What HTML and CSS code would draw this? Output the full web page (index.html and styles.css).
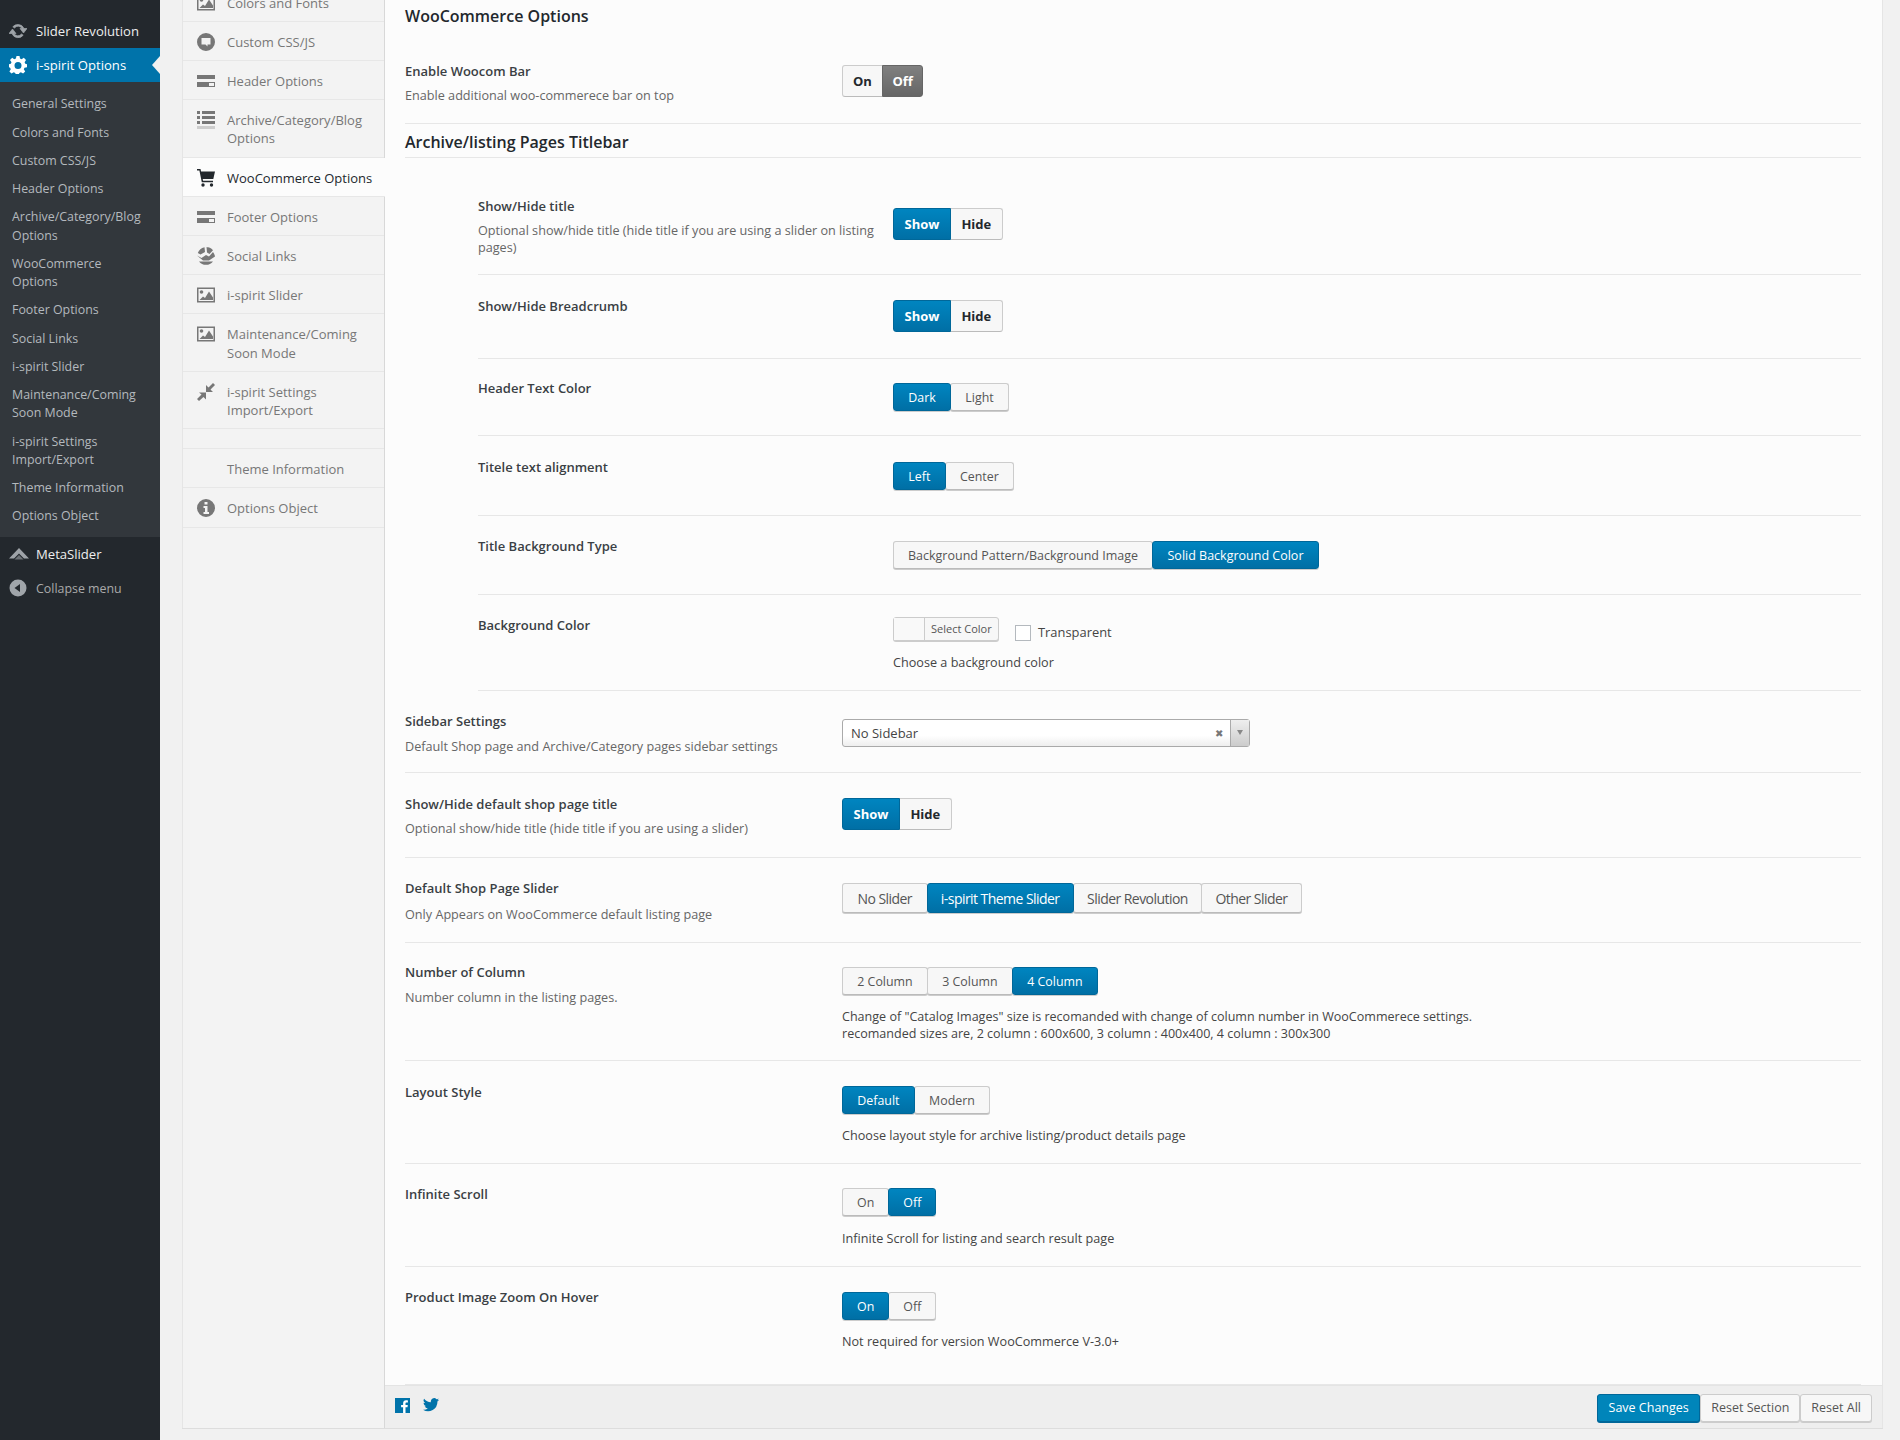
FILE: index.html
```html
<!DOCTYPE html>
<html lang="en">
<head>
<meta charset="utf-8">
<title>i-spirit Options</title>
<link rel="stylesheet" href="styles.css">
</head>
<body>
<svg class="defs" width="0" height="0" aria-hidden="true">
  <symbol id="i-card" viewBox="0 0 18 12"><path d="M0 0h18v4H0zM0 7h18v5H0zM12 8h5v3h-5z" fill-rule="evenodd"/></symbol>
  <symbol id="i-list" viewBox="0 0 18 18"><path d="M0 0h3v3H0zM5 0h13v3H5zM0 5h3v3H0zM5 5h13v3H5zM0 10h3v3H0zM5 10h13v3H5z"/><path d="M0 15h18v3H0z" opacity=".3"/></symbol>
  <symbol id="i-img" viewBox="0 0 18 15"><path fill-rule="evenodd" d="M0 0h18v15H0zM1.500 1.500v12h15v-12z"/><circle cx="4.500" cy="4.500" r="1.800"/><path d="M2.500 12.500 6 9l2 1.500L12 4l4 6v2.500z"/></symbol>
  <symbol id="i-comment" viewBox="0 0 18 18"><path fill-rule="evenodd" d="M9 0a9 9 0 1 0 0 18A9 9 0 0 0 9 0zM4.500 5h9v6.500H10.500v2l-2-2h-4z"/></symbol>
  <symbol id="i-cart" viewBox="0 0 18 18"><path d="M0 0h3.500l.6 2.500H18l-1.700 7.500H5.700l.4 1.800H16v1.500H4.800L2.400 1.500H0z"/><circle cx="6" cy="16" r="1.700"/><circle cx="14.500" cy="16" r="1.700"/></symbol>
  <symbol id="i-globe" viewBox="0 0 18 18"><path d="M9 0a9 9 0 0 1 7 3.300L12.500 7 10 5.500 9.500 0zM7.500.2 8 5 3.500 7.500.8 6A9 9 0 0 1 7.500.2zM0 8.500l4.500 2.500L9 8l3 1.500 4-4.500a9 9 0 0 1 2 4.500L12 13.500H6zM2 14.500h14a9 9 0 0 1-14 0z"/></symbol>
  <symbol id="i-compress" viewBox="0 0 18 18"><path d="M18 2 13.500 6.500 16 9H9V2l2.500 2.500L16 0zM0 16l4.500-4.500L2 9.500h7v7l-2.500-2.500L2 18z"/></symbol>
  <symbol id="i-info" viewBox="0 0 18 18"><path fill-rule="evenodd" d="M9 0a9 9 0 1 0 0 18A9 9 0 0 0 9 0zM7.500 3h3v2.600h-3zM6.500 7h4v6H12v2H6.500v-2H8V9H6.500z"/></symbol>
</svg>

<div class="page">
  <nav class="admin">
    <div class="admin-top">
      <a class="admin-item">
        <svg class="admin-icon admin-icon-thick" viewBox="0 0 18 18"><path d="M9 2.500a6.500 6.500 0 0 1 6 4H18l-3.500 4.500L11 6.500h2A4.500 4.500 0 0 0 5.500 6L3.800 4.800A6.500 6.500 0 0 1 9 2.500zM3.500 7 7 11.500H5a4.500 4.500 0 0 0 7.500.5l1.700 1.200A6.500 6.500 0 0 1 3 11.500H0z"/></svg>
        <span>Slider Revolution</span>
      </a>
    </div>
    <a class="admin-item admin-item-active">
      <svg class="admin-icon" viewBox="0 0 18 18"><path fill-rule="evenodd" d="M7.500 0h3l.5 2.500 1.600.7L14.800 1.800 17 4l-1.400 2.200.7 1.600L18 8.200v3l-2.500.5-.7 1.600 1.400 2.200-2.100 2.100-2.200-1.400-1.600.7-.5 2.500h-3l-.5-2.500-1.600-.7-2.200 1.400L.4 15.500 1.800 13.300l-.7-1.600L0 11.200v-3l1.800-.4.700-1.600L1 4l2.200-2.200 2 1.400 1.700-.7zM9 6a3.500 3.500 0 1 0 0 7 3.500 3.500 0 0 0 0-7z"/></svg>
      <span>i-spirit Options</span>
    </a>
    <ul class="admin-sub">
      <li>General Settings</li>
      <li>Colors and Fonts</li>
      <li>Custom CSS/JS</li>
      <li>Header Options</li>
      <li>Archive/Category/Blog Options</li>
      <li>WooCommerce Options</li>
      <li>Footer Options</li>
      <li>Social Links</li>
      <li>i-spirit Slider</li>
      <li>Maintenance/Coming Soon Mode</li>
      <li>i-spirit Settings Import/Export</li>
      <li>Theme Information</li>
      <li>Options Object</li>
    </ul>
    <div class="admin-bottom">
      <a class="admin-item">
        <svg class="admin-icon admin-icon-wide" viewBox="0 0 20 12"><path d="M10 0 20 10.500h-5L10 5.500 5 10.500H0z"/><path d="M10 7l4.500 4.500h-9z" opacity=".6"/></svg>
        <span>MetaSlider</span>
      </a>
      <a class="admin-item admin-collapse">
        <svg class="admin-icon" viewBox="0 0 18 18"><path fill-rule="evenodd" d="M9 .5a8.500 8.500 0 1 0 0 17 8.500 8.500 0 0 0 0-17zM11 5v8L5.500 9z"/></svg>
        <span>Collapse menu</span>
      </a>
    </div>
  </nav>

  <div class="content">
    <div class="panel">
      <aside class="tabs">
        <ul class="tab-list">
          <li class="tab"><svg class="tab-icon"><use href="#i-img"/></svg><span>Colors and Fonts</span></li>
          <li class="tab"><svg class="tab-icon"><use href="#i-comment"/></svg><span>Custom CSS/JS</span></li>
          <li class="tab"><svg class="tab-icon"><use href="#i-card"/></svg><span>Header Options</span></li>
          <li class="tab"><svg class="tab-icon"><use href="#i-list"/></svg><span>Archive/Category/Blog Options</span></li>
          <li class="tab tab-active"><svg class="tab-icon"><use href="#i-cart"/></svg><span>WooCommerce Options</span></li>
          <li class="tab"><svg class="tab-icon"><use href="#i-card"/></svg><span>Footer Options</span></li>
          <li class="tab"><svg class="tab-icon"><use href="#i-globe"/></svg><span>Social Links</span></li>
          <li class="tab"><svg class="tab-icon"><use href="#i-img"/></svg><span>i-spirit Slider</span></li>
          <li class="tab"><svg class="tab-icon"><use href="#i-img"/></svg><span>Maintenance/Coming Soon Mode</span></li>
          <li class="tab"><svg class="tab-icon"><use href="#i-compress"/></svg><span>i-spirit Settings Import/Export</span></li>
          <li class="tab tab-gap"></li>
          <li class="tab"><span class="tab-noicon">Theme Information</span></li>
          <li class="tab"><svg class="tab-icon"><use href="#i-info"/></svg><span>Options Object</span></li>
        </ul>
      </aside>

      <div class="main">
        <main class="form">
          <h2 class="form-title">WooCommerce Options</h2>

          <section class="row row-woo">
            <div class="label"><h4>Enable Woocom Bar</h4><p class="p-tight">Enable additional woo-commerece bar on top</p></div>
            <div class="ctl ctl-up"><div class="seg seg-bold seg-woo"><span>On</span><span class="on-grey">Off</span></div></div>
          </section>

          <h3 class="section-title">Archive/listing Pages Titlebar</h3>

          <div class="nested">
            <section class="row row-first">
              <div class="label"><h4>Show/Hide title</h4><p class="p-tight">Optional show/hide title (hide title if you are using a slider on listing pages)</p></div>
              <div class="ctl"><div class="seg seg-bold"><span class="on">Show</span><span>Hide</span></div></div>
            </section>
            <section class="row row-crumb">
              <div class="label"><h4>Show/Hide Breadcrumb</h4></div>
              <div class="ctl"><div class="seg seg-bold"><span class="on">Show</span><span>Hide</span></div></div>
            </section>
            <section class="row row-htc">
              <div class="label"><h4>Header Text Color</h4></div>
              <div class="ctl"><div class="seg"><span class="on">Dark</span><span>Light</span></div></div>
            </section>
            <section class="row row-align">
              <div class="label"><h4>Titele text alignment</h4></div>
              <div class="ctl"><div class="seg"><span class="on">Left</span><span>Center</span></div></div>
            </section>
            <section class="row row-bgt">
              <div class="label"><h4>Title Background Type</h4></div>
              <div class="ctl"><div class="seg seg-bgt"><span>Background Pattern/Background Image</span><span class="on">Solid Background Color</span></div></div>
            </section>
            <section class="row row-bgc">
              <div class="label"><h4>Background Color</h4></div>
              <div class="ctl ctl-high">
                <div class="picker">
                  <div class="color-btn"><i class="swatch"></i><span>Select Color</span></div>
                  <label class="check"><i class="box"></i>Transparent</label>
                </div>
                <p class="note">Choose a background color</p>
              </div>
            </section>
          </div>

          <section class="row row-side">
            <div class="label"><h4>Sidebar Settings</h4><p>Default Shop page and Archive/Category pages sidebar settings</p></div>
            <div class="ctl ctl-select">
              <div class="select"><span class="select-text">No Sidebar</span><span class="select-x">&#10006;</span><span class="select-arrow"></span></div>
            </div>
          </section>
          <section class="row row-shop">
            <div class="label"><h4>Show/Hide default shop page title</h4><p class="p-tight">Optional show/hide title (hide title if you are using a slider)</p></div>
            <div class="ctl ctl-up"><div class="seg seg-bold"><span class="on">Show</span><span>Hide</span></div></div>
          </section>
          <section class="row row-slider">
            <div class="label"><h4>Default Shop Page Slider</h4><p class="p-low">Only Appears on WooCommerce default listing page</p></div>
            <div class="ctl"><div class="seg seg-tall"><span>No Slider</span><span class="on">i-spirit Theme Slider</span><span>Slider Revolution</span><span>Other Slider</span></div></div>
          </section>
          <section class="row row-cols">
            <div class="label"><h4>Number of Column</h4><p>Number column in the listing pages.</p></div>
            <div class="ctl">
              <div class="seg"><span>2 Column</span><span>3 Column</span><span class="on">4 Column</span></div>
              <p class="note note-cols">Change of "Catalog Images" size is recomanded with change of column number in WooCommerece settings.<br>recomanded sizes are, 2 column : 600x600, 3 column : 400x400, 4 column : 300x300</p>
            </div>
          </section>
          <section class="row row-layout">
            <div class="label"><h4>Layout Style</h4></div>
            <div class="ctl ctl-up">
              <div class="seg"><span class="on">Default</span><span>Modern</span></div>
              <p class="note">Choose layout style for archive listing/product details page</p>
            </div>
          </section>
          <section class="row row-inf">
            <div class="label"><h4>Infinite Scroll</h4></div>
            <div class="ctl ctl-up">
              <div class="seg seg-onoff"><span>On</span><span class="on">Off</span></div>
              <p class="note">Infinite Scroll for listing and search result page</p>
            </div>
          </section>
          <section class="row row-zoom">
            <div class="label"><h4>Product Image Zoom On Hover</h4></div>
            <div class="ctl">
              <div class="seg seg-onoff"><span class="on">On</span><span>Off</span></div>
              <p class="note">Not required for version WooCommerce V-3.0+</p>
            </div>
          </section>
        </main>

        <footer class="bar">
          <div class="social">
            <svg class="social-icon" viewBox="0 0 15 15"><path fill="#0073aa" d="M0 0h15v15H0z"/><path fill="#fff" d="M10.500 15V9.200h2l.3-2.300h-2.300V5.500c0-.7.200-1.100 1.100-1.100h1.300v-2c-.3 0-1-.1-1.800-.1-1.800 0-3 1.100-3 3.100v1.500h-2v2.300h2V15z"/></svg>
            <svg class="social-icon social-tw" viewBox="0 0 16 14"><path fill="#0073aa" d="M16 1.700a6.500 6.500 0 0 1-1.900.5A3.300 3.300 0 0 0 15.600.4a6.500 6.500 0 0 1-2.100.8 3.300 3.300 0 0 0-5.600 3A9.300 9.300 0 0 1 1.100.7a3.300 3.300 0 0 0 1 4.400 3.200 3.200 0 0 1-1.500-.4c0 1.600 1.100 3 2.600 3.300a3.300 3.300 0 0 1-1.500.1 3.300 3.300 0 0 0 3.100 2.300A6.600 6.600 0 0 1 0 11.700 9.300 9.300 0 0 0 14.400 3.500 6.600 6.600 0 0 0 16 1.700z"/></svg>
          </div>
          <div class="actions">
            <span class="btn btn-primary">Save Changes</span>
            <span class="btn">Reset Section</span>
            <span class="btn">Reset All</span>
          </div>
        </footer>
      </div>
    </div>
  </div>
</div>
</body>
</html>
```
FILE: styles.css
```css
* { box-sizing: border-box; }
html, body { margin: 0; height: 1440px; overflow: hidden; }
body { background: #f1f1f1; font-family: "Open Sans", "Liberation Sans", sans-serif; font-size: 13px; color: #444; }
h2, h3, h4, p, ul { margin: 0; padding: 0; }
ul { list-style: none; }
.defs { position: absolute; }

.page { display: flex; height: 1440px; }

/* WordPress admin menu */
.admin { width: 160px; flex: none; background: #23282d; color: #eee; display: flex; flex-direction: column; }
.admin-top { padding-top: 14px; }
.admin-item { display: flex; align-items: center; height: 34px; padding-left: 9px; font-size: 13.100px; color: #eee; }
.admin-item span { margin-left: 9px; }
.admin-icon { width: 18px; height: 18px; fill: #9ea3a8; flex: none; }
.admin-icon-thick { stroke: #9ea3a8; stroke-width: .7px; }
.admin-icon-wide { width: 20px; height: 12px; margin-right: -2px; }
.admin-item-active { position: relative; background: #0073aa; color: #fff; }
.admin-item-active .admin-icon { fill: #fff; }
.admin-item-active::after { content: ""; position: absolute; right: 0; top: 8px; border: 9px solid transparent; border-left: 0; border-right: 8px solid #f1f1f1; }
.admin-sub { background: #32373c; padding: 8.300px 0 6.700px; color: #b4b9be; font-size: 12.400px; line-height: 18.250px; }
.admin-sub li { padding: 5px 12px; }
.admin-collapse { color: #aaa; font-size: 12.400px; }
.admin-collapse .admin-icon { fill: #a0a5aa; }

/* Panel */
.content { flex: 1; padding: 0 17px 0 22px; min-width: 0; }
.panel { height: 1429px; display: flex; border-bottom: 1px solid #ddd; }

/* Options tabs */
.tabs { width: 203px; flex: none; background: #f3f3f3; border-left: 1px solid #e5e5e5; border-right: 1px solid #d8d8d8; }
.tab-list { margin-top: -17.500px; }
.tab { display: flex; padding: 11px 8px 9px 14px; line-height: 18.200px; color: #777; border-bottom: 1px solid #e7e7e7; font-size: 13px; }
.tab-icon { width: 18px; height: 18px; fill: #777; flex: none; margin-right: 12px; }
.tab-noicon { margin-left: 30px; }
.tab-active { background: #fcfcfc; color: #23282d; margin-right: -1px; position: relative; }
.tab-active .tab-icon { fill: #23282d; }
.tab-gap { height: 20px; padding: 0; }

/* Form */
.main { flex: 1; min-width: 0; display: flex; flex-direction: column; background: #fcfcfc; border-right: 1px solid #e5e5e5; }
.form { flex: 1; padding: 0 21px 0 20px; min-width: 0; }
.form-title { font-size: 16px; line-height: 22px; font-weight: 600; color: #23282d; padding-top: 5px; height: 51px; }
.section-title { font-size: 16px; line-height: 22px; font-weight: 600; color: #23282d; height: 34px; padding-top: 7px; border-bottom: 1px solid #e7e7e7; }
.row { display: grid; grid-template-columns: 437px 1fr; border-bottom: 1px solid #e7e7e7; padding-top: 21px; }
.nested { margin-left: 73px; }
.nested .row { grid-template-columns: 415px 1fr; }
.label h4 { font-size: 13px; line-height: 18px; font-weight: 600; color: #3a3f44; }
.label p { font-size: 12.650px; line-height: 17px; color: #666; margin-top: 8px; max-width: 405px; }
.label .p-low { margin-top: 9px; }
.label .p-tight { margin-top: 7px; }
.ctl { padding-top: 4px; color: #444; }
.ctl-up { padding-top: 3px; }
.ctl-high { padding-top: 1px; }
.ctl-select { padding-top: 7px; }

.row-woo { padding-top: 11px; height: 73px; }
.row-first { padding-top: 39px; height: 117px; }
.row-first .ctl { padding-top: 11px; }
.row-crumb { padding-top: 22px; height: 84px; }
.row-crumb .ctl { padding-top: 3px; }
.row-htc { height: 77px; padding-top: 20px; }
.row-align { height: 80px; padding-top: 22px; }
.row-bgt { height: 79px; }
.row-bgc { height: 96px; }
.row-side { height: 82px; padding-top: 21px; }
.row-shop { height: 85px; padding-top: 22px; }
.row-slider { height: 85px; padding-top: 21px; }
.row-cols { height: 118px; padding-top: 20px; }
.row-layout { height: 103px; padding-top: 22px; }
.row-inf { height: 103px; padding-top: 21px; }
.row-inf .note { margin-top: 14px; }
.row-zoom { height: 118px; }

/* Segmented buttons */
.seg { display: inline-flex; vertical-align: top; }
.seg span { height: 28px; line-height: 27px; padding: 0 14.300px; border: 1px solid #ccc; border-bottom-color: #bbb; background: #f7f7f7; color: #555; font-size: 12.400px; white-space: nowrap; margin-right: -1px; box-shadow: 0 1px 0 #ccc; border-radius: 3px; }
.seg span:last-child { margin-right: 0; }
.seg .on { background: linear-gradient(#0085c0, #006fa5); border-color: #006799; color: #fff; position: relative; }
.seg-bold span { height: 32px; line-height: 30px; font-weight: 700; font-size: 13px; color: #23282d; padding: 0 10.500px; box-shadow: none; border-radius: 0; }
.seg-bold span:first-child { border-radius: 3px 0 0 3px; }
.seg-bold span:last-child { border-radius: 0 3px 3px 0; }
.seg-bold .on { color: #fff; }
.seg-woo span { padding: 0 10px; }
.seg-bold .on-grey { background: linear-gradient(#808080, #666); border-color: #666; color: #fff; padding: 0 9.500px; }
.seg-bgt span { font-size: 12.500px; padding: 0 14px; }
.seg-bgt .on { padding: 0 14.500px; }
.seg-tall span { height: 30px; line-height: 29px; font-size: 14px; letter-spacing: -.55px; padding: 0 13.300px; }
.seg-tall span:first-child { padding: 0 14.500px; }
.seg-onoff span { padding: 0 14px; }

.note { margin-top: 13px; font-size: 12.650px; line-height: 17px; color: #444; }
.note-cols { font-size: 12.550px; }

/* Colour picker */
.picker { display: flex; align-items: flex-end; }
.color-btn { display: flex; width: 106px; height: 24px; border: 1px solid #ccc; border-radius: 3px; background: #f7f7f7; box-shadow: 0 1px 0 #ccc; font-size: 11px; line-height: 22px; color: #555; }
.swatch { display: block; width: 31px; border-right: 1px solid #ccc; background: #f9f9f9; }
.color-btn span { padding-left: 6px; }
.check { display: flex; align-items: center; margin-left: 16px; color: #444; font-size: 12.900px; }
.box { display: block; width: 16px; height: 16px; border: 1px solid #b4b9be; background: #fff; margin-right: 7px; margin-bottom: -1px; }

/* Select */
.select { position: relative; display: flex; align-items: center; width: 408px; height: 28px; border: 1px solid #aaa; border-radius: 3px; background: linear-gradient(#fff 60%, #eee); font-size: 13px; color: #444; padding-left: 8px; }
.select-text { flex: 1; }
.select-x { position: absolute; right: 26px; font-size: 10px; color: #777; }
.select-arrow { position: absolute; right: 0; top: 0; bottom: 0; width: 19px; border-left: 1px solid #aaa; background: linear-gradient(#eee, #ccc); }
.select-arrow::after { content: ""; position: absolute; left: 6px; top: 10px; border: 3.500px solid transparent; border-top: 5px solid #888; border-bottom: 0; }

/* Footer bar */
.bar { height: 43px; flex: none; display: flex; justify-content: space-between; align-items: flex-start; background: #eee; border-top: 1px solid #e4e4e4; padding: 8px 10px 0 10px; }
.social { display: flex; gap: 13px; padding-top: 4px; }
.social-icon { width: 15px; height: 15px; display: block; }
.social-tw { width: 16px; height: 14px; }
.actions { display: flex; }
.btn { height: 28px; line-height: 26px; padding: 0 10px; border: 1px solid #ccc; background: #f7f7f7; color: #555; font-size: 12.500px; border-radius: 3px; box-shadow: 0 1px 0 #ccc; }
.btn-primary { background: #0085ba; border-color: #006799; color: #fff; box-shadow: 0 1px 0 #006799; padding: 0 10.500px; }
```
